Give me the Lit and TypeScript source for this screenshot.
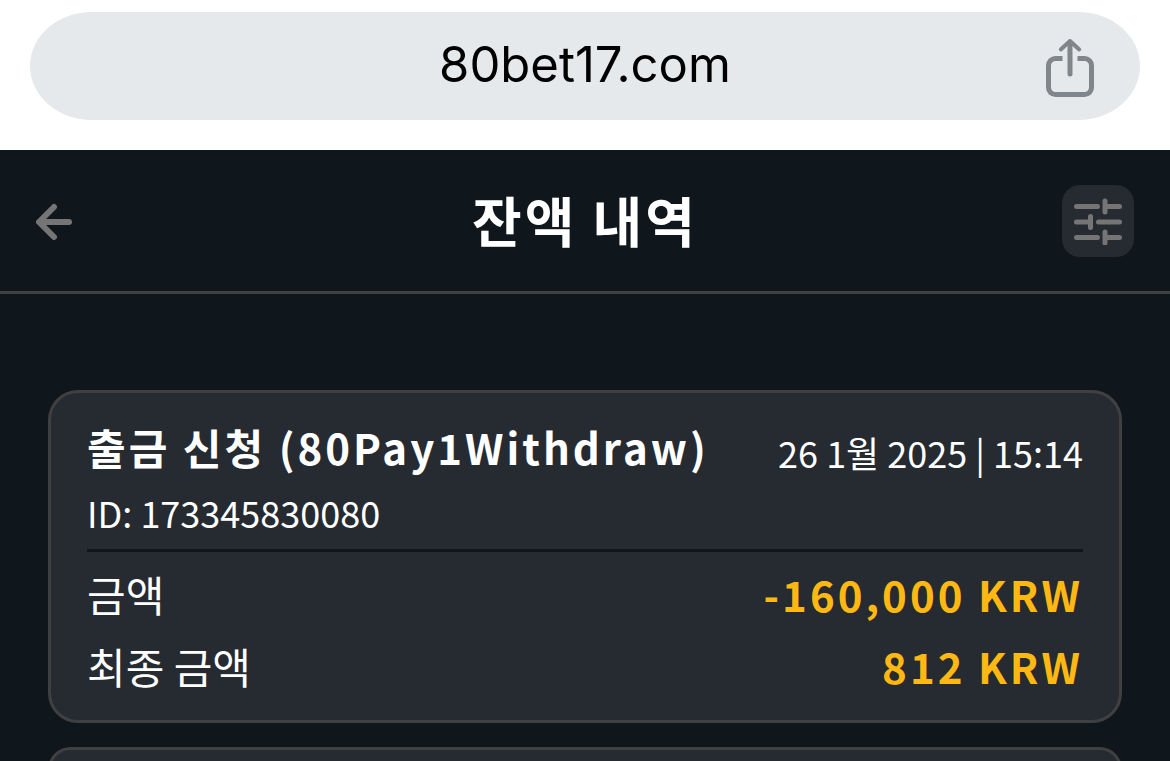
import { LitElement, html, css } from "lit";
import { customElement, property } from "lit/decorators.js";

interface Transaction {
  title: string;
  date: string;
  id: string;
  amounts: { label: string; value: string }[];
}

const transactions: Transaction[] = [
  {
    title: "출금 신청 (80Pay1Withdraw)",
    date: "26 1월 2025 | 15:14",
    id: "173345830080",
    amounts: [
      { label: "금액", value: "-160,000 KRW" },
      { label: "최종 금액", value: "812 KRW" },
    ],
  },
];

@customElement("address-bar")
class AddressBar extends LitElement {
  @property() url = "";

  static styles = css`
    :host {
      display: block;
      background: #ffffff;
      padding: 12px 30px 30px;
    }
    .pill {
      display: grid;
      grid-template-columns: 48px 1fr 48px;
      align-items: center;
      height: 108px;
      box-sizing: border-box;
      padding: 0 46px;
      background: #e5e9ec;
      border-radius: 62px / 54px;
    }
    .url {
      grid-column: 2;
      min-width: 0;
      width: 100%;
      box-sizing: border-box;
      border: 0;
      padding: 0 0 2px;
      outline: none;
      background: transparent;
      color: #000000;
      font-family: Inter, "Liberation Sans", sans-serif;
      font-size: 49px;
      line-height: 60px;
      text-align: center;
    }
    .share {
      border: 0;
      padding: 0;
      background: transparent;
      color: #80868a;
      cursor: pointer;
    }
    .share svg {
      display: block;
    }
  `;

  render() {
    return html`
      <div class="pill">
        <input class="url" type="text" aria-label="주소" .value=${this.url} />
        <button class="share" type="button" aria-label="공유">
          <svg width="48" height="62" viewBox="0 0 48 62" fill="none" stroke="currentColor">
            <path
              d="M16.5 23.5H9.5A7 7 0 0 0 2.5 30.5V52.5A7 7 0 0 0 9.5 59.5H38.5A7 7 0 0 0 45.5 52.5V30.5A7 7 0 0 0 38.5 23.5H31.5"
              stroke-width="5"
            />
            <path d="M24 39V7" stroke-width="5" stroke-linecap="round" />
            <path d="M14.8 14.5L24 6L33.2 14.5" stroke-width="4" stroke-linecap="round" stroke-linejoin="round" />
          </svg>
        </button>
      </div>
    `;
  }
}

@customElement("page-header")
class PageHeader extends LitElement {
  @property() heading = "";

  static styles = css`
    :host {
      display: grid;
      grid-template-columns: 72px 1fr 72px;
      align-items: start;
      padding: 35px 36px 34px;
      border-bottom: 3px solid #404042;
    }
    .title {
      margin: 0;
      font-size: 54px;
      line-height: 70px;
      font-weight: 700;
      letter-spacing: var(--tracking);
      text-align: center;
    }
    .back,
    .filter {
      display: grid;
      place-items: center;
      height: 72px;
      border: 0;
      padding: 0;
      background: transparent;
      color: #757575;
      cursor: pointer;
    }
    .back {
      justify-self: start;
      width: 36px;
    }
    .filter {
      width: 72px;
      border-radius: 18px;
      background: #262a31;
    }
  `;

  render() {
    return html`
      <button class="back" type="button" aria-label="뒤로">
        <svg width="36" height="38" viewBox="0 -2 36 38" fill="none" stroke="currentColor"
          stroke-width="6" stroke-linecap="round" stroke-linejoin="round">
          <path d="M33 18H4M18 3L3 18L18 33" />
        </svg>
      </button>
      <h1 class="title">${this.heading}</h1>
      <button class="filter" type="button" aria-label="필터">
        <svg width="48" height="48" viewBox="0 0 48 48" fill="none" stroke="currentColor"
          stroke-width="5" stroke-linecap="round">
          <path d="M2.5 9.5H23.5M31 4V15M31 9.5H45.5" />
          <path d="M2.5 25H16.5M16.5 19.5V30.5M24.5 25H45.5" />
          <path d="M2.5 40.5H23.5M31 35V46M31 40.5H45.5" />
        </svg>
      </button>
    `;
  }
}

@customElement("transaction-card")
class TransactionCard extends LitElement {
  @property({ attribute: false }) item?: Transaction;

  static styles = css`
    :host {
      display: block;
      padding: 21px 36px 18px;
      border: 3px solid #404042;
      border-radius: 30px;
      background: #262a31;
    }
    .head {
      padding-bottom: 9px;
      border-bottom: 3px solid #0f161c;
      margin-bottom: 6px;
    }
    .line,
    .row {
      display: flex;
      justify-content: space-between;
    }
    .line {
      align-items: flex-end;
      margin-bottom: 4px;
    }
    .row {
      align-items: baseline;
    }
    .title {
      margin: 0;
      font-size: 42px;
      line-height: 66px;
      font-weight: 700;
      letter-spacing: var(--tracking);
    }
    .date,
    .id {
      margin: 0;
      font-size: 36px;
      line-height: 56px;
    }
    .rows {
      margin: 0;
    }
    .label,
    .value {
      margin: 0;
      font-size: 42px;
      line-height: 72px;
    }
    .value {
      color: #fdb813;
      font-weight: 700;
      letter-spacing: var(--tracking);
    }
  `;

  render() {
    const item = this.item;
    if (!item) return html``;
    return html`
      <div class="head">
        <div class="line">
          <h2 class="title">${item.title}</h2>
          <time class="date">${item.date}</time>
        </div>
        <p class="id">ID: ${item.id}</p>
      </div>
      <dl class="rows">
        ${item.amounts.map(
          (amount) => html`
            <div class="row">
              <dt class="label">${amount.label}</dt>
              <dd class="value">${amount.value}</dd>
            </div>
          `,
        )}
      </dl>
    `;
  }
}

@customElement("app-root")
class AppRoot extends LitElement {
  static styles = css`
    :host {
      --tracking: 3px;
      display: block;
      height: 100vh;
      overflow: hidden;
      background: #0f161c;
      color: #ffffff;
      font-family: "Noto Sans CJK KR", "Noto Sans", sans-serif;
    }
    .list {
      display: grid;
      gap: 24px;
      padding: 96px 48px 24px;
    }
  `;

  render() {
    return html`
      <address-bar url="80bet17.com"></address-bar>
      <page-header heading="잔액 내역"></page-header>
      <main class="list">
        ${transactions.map((item) => html`<transaction-card .item=${item}></transaction-card>`)}
        <transaction-card></transaction-card>
      </main>
    `;
  }
}
